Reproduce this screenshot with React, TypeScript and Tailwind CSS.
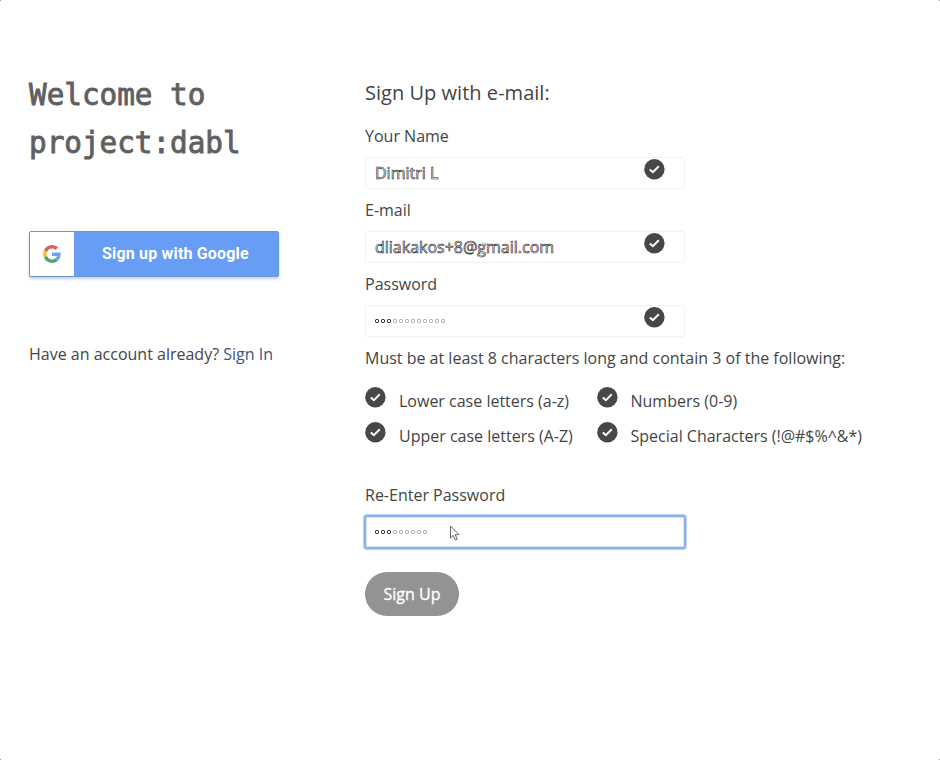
import React from "react";

function Check({ className = "" }: { className?: string }) {
  return (
    <svg className={"block h-[21px] w-[21px] shrink-0 " + className} viewBox="0 0 21 21">
      <circle cx="10.4" cy="10.2" r="10.2" fill="#474747" />
      <path d="M5.8 10.5 8.9 13.2 14.8 7.3" fill="none" stroke="#fff" strokeWidth="2" />
    </svg>
  );
}

function GoogleLogo() {
  return (
    <svg className="h-[18px] w-[18px]" viewBox="0 0 48 48">
      <path fill="#dc6558" d="M24 9.5c3.54 0 6.71 1.22 9.21 3.6l6.85-6.85C35.9 2.38 30.47 0 24 0 14.62 0 6.51 5.38 2.56 13.22l7.98 6.19C12.43 13.72 17.74 9.5 24 9.5z" />
      <path fill="#6ea2ef" d="M46.98 24.55c0-1.57-.15-3.09-.38-4.55H24v9.02h12.94c-.58 2.96-2.26 5.48-4.78 7.18l7.73 6c4.51-4.18 7.09-10.36 7.09-17.65z" />
      <path fill="#f0c63b" d="M10.53 28.59c-.48-1.45-.76-2.99-.76-4.59s.27-3.14.76-4.59l-7.98-6.19C.92 16.46 0 20.12 0 24c0 3.88.92 7.54 2.56 10.78l7.97-6.19z" />
      <path fill="#53a36d" d="M24 48c6.48 0 11.93-2.13 15.89-5.81l-7.73-6c-2.15 1.45-4.92 2.3-8.16 2.3-6.26 0-11.57-4.22-13.47-9.91l-7.98 6.19C6.51 42.62 14.62 48 24 48z" />
    </svg>
  );
}

function Dots({ count }: { count: number }) {
  return (
    <div className="flex gap-[2px]">
      {Array.from({ length: count }, (_, i) => (
        <span
          key={i}
          className={"h-1 w-1 rounded-[1.5px] border " + (i < 3 ? "border-black" : "border-[#999]")}
        />
      ))}
    </div>
  );
}

function Field({ label, children }: { label: string; children: React.ReactNode }) {
  return (
    <div className="h-[74px]">
      <div className="h-[32px] leading-[22px]">{label}</div>
      <div className="flex h-8 w-[320px] items-center justify-between rounded-[3px] border border-[#f1f1f1] pl-[9px] pr-[19px]">
        {children}
        <Check className="-mt-[8px]" />
      </div>
    </div>
  );
}

function Rule({ text }: { text: string }) {
  return (
    <div className="flex h-[35px]">
      <Check className="mt-px" />
      <span className="ml-[13px] mt-[4px] leading-[22px]">{text}</span>
    </div>
  );
}

const outlined = "text-white [-webkit-text-stroke:0.6px_#222]";

export default function App() {
  return (
    <div className="relative flex h-[760px] w-[940px] overflow-hidden bg-white font-['Open_Sans','Noto_Sans',sans-serif] text-[16px] text-[#444]">
      <span className="absolute left-0 top-0 h-px w-px bg-[#999]" />
      <span className="absolute right-0 top-0 h-px w-px bg-[#999]" />
      <span className="absolute bottom-0 left-0 h-px w-px bg-[#999]" />
      <span className="absolute bottom-0 right-0 h-px w-px bg-[#999]" />

      <aside className="w-[365px] shrink-0 pl-[29px] pt-[70px]">
        <h1 className="w-[260px] origin-left scale-x-[.945] whitespace-nowrap font-['DejaVu_Sans_Mono',monospace] text-[31px] leading-[48px] text-[#606060] [-webkit-text-stroke:0.9px_#606060]">
          Welcome to
          <br />
          project:dabl
        </h1>
        <button className="mt-[65px] flex h-[46px] w-[250px] rounded-[2px] border border-[#6b98cc] bg-[#689df6] shadow-[0_2px_3px_rgba(70,90,130,0.3)]">
          <span className="flex h-full w-[44px] shrink-0 items-center justify-center rounded-[1px] bg-white">
            <GoogleLogo />
          </span>
          <span className="ml-[28px] self-center whitespace-nowrap font-['Roboto',sans-serif] text-[16px] font-bold tracking-[0.18px] text-white">
            Sign up with Google
          </span>
        </button>
        <p className="mt-[66px] whitespace-nowrap leading-[22px]">
          Have an account already? <span className="text-[#3d5283]">Sign In</span>
        </p>
      </aside>

      <main className="flex w-[520px] flex-col pt-[79px]">
        <h2 className="h-[46px] text-[20px] leading-[28px] tracking-[0.03px]">Sign Up with e-mail:</h2>
        <Field label="Your Name">
          <span className={outlined}>Dimitri L</span>
        </Field>
        <Field label="E-mail">
          <span className={outlined}>dliakakos+8@gmail.com</span>
        </Field>
        <Field label="Password">
          <Dots count={12} />
        </Field>
        <p className="h-[39px] whitespace-nowrap leading-[22px]">
          Must be at least 8 characters long and contain 3 of the following:
        </p>
        <div className="grid h-[98px] grid-cols-[231.5px_280px] content-start whitespace-nowrap">
          <Rule text="Lower case letters (a-z)" />
          <Rule text="Numbers (0-9)" />
          <Rule text="Upper case letters (A-Z)" />
          <Rule text="Special Characters (!@#$%^&*)" />
        </div>
        <div className="h-[32px] leading-[22px]">Re-Enter Password</div>
        <div className="relative flex h-8 w-[320px] items-center rounded-[2px] border border-[#8db1e8] bg-white pl-[9px] shadow-[0_0_0_1px_#8db1e8,0_0_1px_2px_#b5cff5,inset_0_0_1px_1px_#d3e3fa]">
          <Dots count={9} />
          <svg className="absolute left-[83px] top-[8px] h-[17px] w-[12px]" viewBox="0 0 12 17">
            <path d="M1.5 1v12l2.8-2.6 2 4.6 1.9-.8-2-4.5h3.8z" fill="#fff" stroke="#444" strokeWidth=".8" />
          </svg>
        </div>
        <button className="mt-[24px] h-[44px] w-[94px] rounded-full bg-[#939393] text-white [-webkit-text-stroke:0.3px_#fff]">
          Sign Up
        </button>
      </main>
    </div>
  );
}
